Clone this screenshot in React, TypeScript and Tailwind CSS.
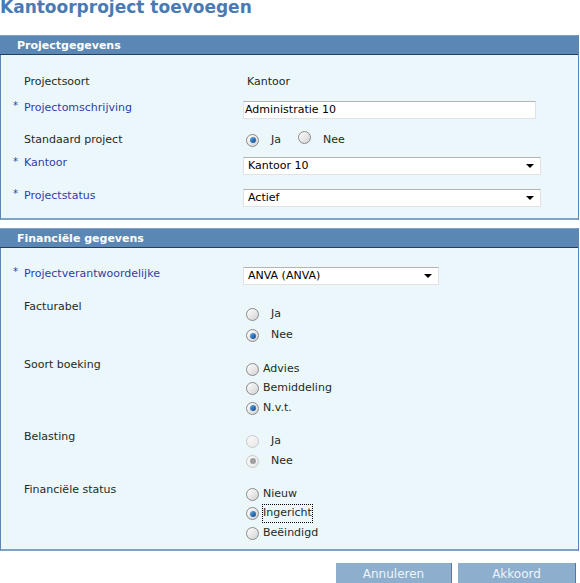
import React from "react";

const font = { fontFamily: '"DejaVu Sans", Verdana, sans-serif' };

function Radio({ checked, disabled }: { checked?: boolean; disabled?: boolean }) {
  return (
    <span
      className={
        "relative inline-flex h-[13px] w-[13px] shrink-0 items-center justify-center rounded-full border bg-gradient-to-br " +
        (disabled
          ? "border-[#c8c8c8] from-[#fafafa] to-[#e8e8e8]"
          : "border-[#8a8a8a] from-white to-[#d2d2d2]")
      }
    >
      {checked && (
        <span
          className={
            "h-[6px] w-[6px] rounded-full " +
            (disabled ? "bg-[#a0a0a0]" : "bg-gradient-to-br from-[#5fb2ee] to-[#0b3f86]")
          }
        />
      )}
    </span>
  );
}

function Label({ text, required }: { text: string; required?: boolean }) {
  if (required) {
    return (
      <div className="flex w-[242px] shrink-0 items-center text-[#2f3ea6]">
        <span className="ml-[12px] w-[11px] shrink-0 text-[10px] leading-none -translate-y-[2px]">*</span>
        <span>{text}</span>
      </div>
    );
  }
  return <div className="w-[242px] shrink-0 pl-[23px] text-[#1e2b1e]">{text}</div>;
}

function Select({ value, width }: { value: string; width: string }) {
  return (
    <div
      className={
        "flex h-[18px] items-center justify-between border border-[#e2e2e2] border-t-[#b4b4b4] bg-white pl-[4px] pr-[6px] text-black " +
        width
      }
    >
      <span>{value}</span>
      <span className="h-0 w-0 border-x-[4px] border-t-[4px] border-x-transparent border-t-black" />
    </div>
  );
}

function Header({ title }: { title: string }) {
  return (
    <div className="h-[20px] border-t border-t-[#7ea2c6] border-b border-b-[#24405e] bg-[#5a87b4] pl-[17px] text-[11px] font-bold leading-[19px] text-white">
      {title}
    </div>
  );
}

function RadioOption({
  label,
  checked,
  disabled,
  spaced,
  focus,
  h,
}: {
  label: string;
  checked?: boolean;
  disabled?: boolean;
  spaced?: boolean;
  focus?: boolean;
  h: string;
}) {
  return (
    <div className={"flex items-center pl-[3px] " + h}>
      <Radio checked={checked} disabled={disabled} />
      <span
        className={
          (spaced ? "ml-[12px] " : "ml-[4px] ") +
          (focus ? "outline-1 outline-dotted outline-black " : "") +
          "text-[#1e2b1e]"
        }
      >
        {label}
      </span>
    </div>
  );
}

export default function App() {
  return (
    <div className="h-[583px] w-[580px] overflow-hidden bg-white text-[11px]" style={font}>
      <div className="h-[35px] text-[17px] font-bold leading-[15px] text-[#4a7ab4]">
        Kantoorproject toevoegen
      </div>

      {/* Projectgegevens */}
      <div className="mr-[1px] border-r border-r-[#5a87b4]">
        <Header title="Projectgegevens" />
        <div className="border-l border-l-[#5a87b4] border-b-2 border-b-[#7fa3c4] bg-[#ecf7fc] pt-[17px] pb-[2px]">
          <div className="flex h-[20px] items-center">
            <Label text="Projectsoort" />
            <span className="pl-[4px] text-[#1e2b1e]">Kantoor</span>
          </div>
          <div className="flex h-[36px] items-center">
            <div className="mb-[4px]">
              <Label text="Projectomschrijving" required />
            </div>
            <div className="flex h-[18px] w-[293px] items-center border border-[#e2e2e2] border-t-[#b4b4b4] bg-white pl-[1px] text-black">
              Administratie 10
            </div>
          </div>
          <div className="flex h-[24px] items-center">
            <Label text="Standaard project" />
            <div className="flex items-center pl-[3px]">
              <Radio checked />
              <span className="ml-[12px] text-[#1e2b1e]">Ja</span>
              <span className="ml-[17px]">
                <Radio />
              </span>
              <span className="ml-[12px] text-[#1e2b1e]">Nee</span>
            </div>
          </div>
          <div className="flex h-[28px] items-center">
            <div className="mb-[5px]">
              <Label text="Kantoor" required />
            </div>
            <Select value="Kantoor 10" width="w-[298px]" />
          </div>
          <div className="flex h-[36px] items-center">
            <div className="mb-[4px]">
              <Label text="Projectstatus" required />
            </div>
            <Select value="Actief" width="w-[298px]" />
          </div>
        </div>
      </div>

      {/* Financiële gegevens */}
      <div className="mr-[1px] mt-[8px] border-r border-r-[#5a87b4]">
        <Header title="Financiële gegevens" />
        <div className="border-l border-l-[#5a87b4] border-b-2 border-b-[#7fa3c4] bg-[#ecf7fc] pt-[11px] pb-[6px]">
          <div className="flex h-[34px] items-center">
            <div className="mb-[4px]">
              <Label text="Projectverantwoordelijke" required />
            </div>
            <Select value="ANVA (ANVA)" width="w-[196px]" />
          </div>

          <div className="mt-[4px] flex">
            <div className="h-[20px] leading-[20px]">
              <Label text="Facturabel" />
            </div>
            <div className="pt-[7px]">
              <RadioOption label="Ja" spaced h="h-[21px]" />
              <RadioOption label="Nee" checked spaced h="h-[21px]" />
            </div>
          </div>

          <div className="mt-[9px] flex">
            <div className="h-[20px] leading-[20px]">
              <Label text="Soort boeking" />
            </div>
            <div className="pt-[4px]">
              <RadioOption label="Advies" h="h-[20px]" />
              <RadioOption label="Bemiddeling" h="h-[19px]" />
              <RadioOption label="N.v.t." checked h="h-[20px]" />
            </div>
          </div>

          <div className="mt-[9px] flex">
            <div className="h-[20px] leading-[20px]">
              <Label text="Belasting" />
            </div>
            <div className="pt-[4px]">
              <RadioOption label="Ja" spaced disabled h="h-[20px]" />
              <RadioOption label="Nee" spaced disabled checked h="h-[20px]" />
            </div>
          </div>

          <div className="mt-[9px] flex">
            <div className="h-[20px] leading-[20px]">
              <Label text="Financiële status" />
            </div>
            <div className="pt-[4px]">
              <RadioOption label="Nieuw" h="h-[20px]" />
              <RadioOption label="Ingericht" checked focus h="h-[19px]" />
              <RadioOption label="Beëindigd" h="h-[20px]" />
            </div>
          </div>
        </div>
      </div>

      <div className="mt-[12px] flex justify-end gap-[6px] pr-[4px]">
        <button className="h-[21px] w-[116px] border-r border-r-[#4a7ab0] bg-[#8dafcd] text-[12px] text-[#eef4fa]">
          Annuleren
        </button>
        <button className="h-[21px] w-[118px] border-r border-r-[#4a7ab0] bg-[#8dafcd] text-[12px] text-[#eef4fa]">
          Akkoord
        </button>
      </div>
    </div>
  );
}
